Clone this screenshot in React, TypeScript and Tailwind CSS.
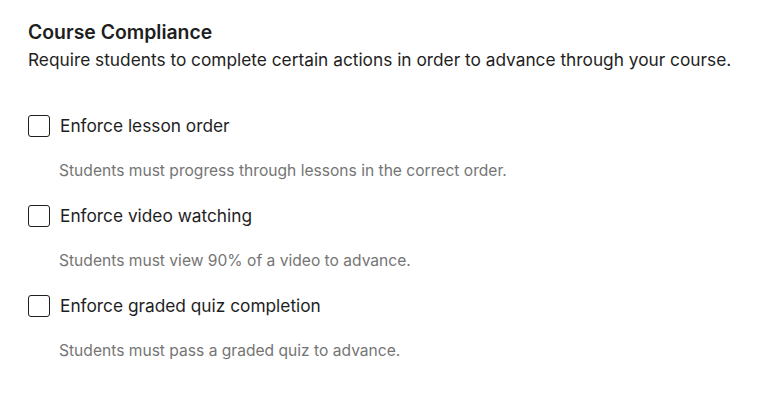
import { useState } from 'react';

const options = [
  {
    id: 'lesson-order',
    label: 'Enforce lesson order',
    help: 'Students must progress through lessons in the correct order.',
  },
  {
    id: 'video-watching',
    label: 'Enforce video watching',
    help: 'Students must view 90% of a video to advance.',
  },
  {
    id: 'quiz-completion',
    label: 'Enforce graded quiz completion',
    help: 'Students must pass a graded quiz to advance.',
  },
];

export default function App() {
  const [checked, setChecked] = useState<Record<string, boolean>>({});

  return (
    <div className="min-h-[411px] w-[768px] bg-white px-7 pt-[21px] font-['Inter',sans-serif] text-[#1e1e1e]">
      <h2 className="text-[19.4px] font-semibold leading-[22px]">Course Compliance</h2>
      <p className="mt-[6px] text-[17.3px] leading-[22px]">
        Require students to complete certain actions in order to advance through your course.
      </p>
      <div className="mt-[44px] flex flex-col">
        {options.map((opt) => (
          <div key={opt.id} className="flex h-[90px] flex-col">
            <label className="flex cursor-pointer items-center gap-[10px]">
              <input
                type="checkbox"
                className="h-[22px] w-[22px] appearance-none rounded-[3px] border-[1.5px] border-[#1e1e1e] bg-white checked:bg-[#1e1e1e]"
                checked={!!checked[opt.id]}
                onChange={() => setChecked({ ...checked, [opt.id]: !checked[opt.id] })}
              />
              <span className="text-[17.3px] leading-[22px]">{opt.label}</span>
            </label>
            <p className="mt-[24px] pl-[31px] text-[15.6px] leading-[20px] text-[#757575]">{opt.help}</p>
          </div>
        ))}
      </div>
    </div>
  );
}
